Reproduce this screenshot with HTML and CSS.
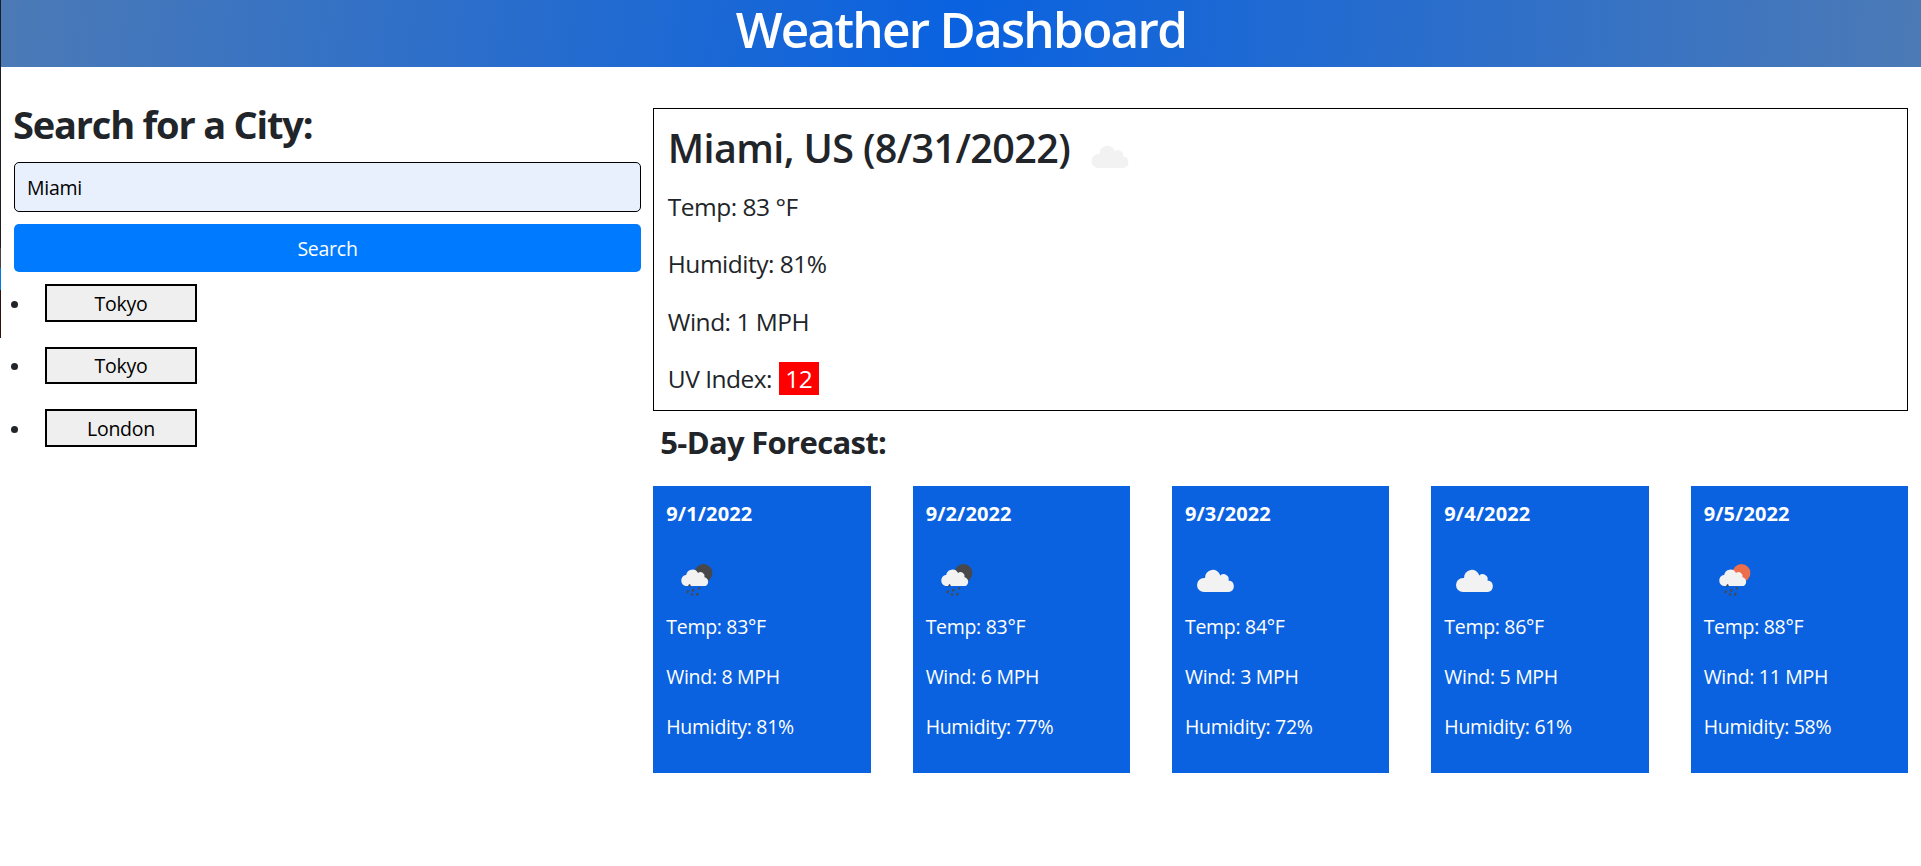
FILE: index.html
```html
<!DOCTYPE html>
<html lang="en">
<head>
<meta charset="utf-8">
<title>Weather Dashboard</title>
<link rel="stylesheet" href="styles.css">
</head>
<body>
<svg width="0" height="0" class="defs">
  <symbol id="cloud" viewBox="0 0 38 24">
    <path fill="#f2f2f2" d="M7 24A7 7 0 0 1 7 10H8A7.800 7.800 0 0 1 23.300 7.500A5 5 0 0 1 31.500 12.500A5.800 5.800 0 0 1 32 24Z"/>
  </symbol>
  <symbol id="rain" viewBox="0 0 33 32">
    <circle cx="24" cy="9" r="9" fill="currentColor"/>
    <path fill="#f2f2f2" d="M6 22A5.700 5.700 0 0 1 6 11H6.700A6.300 6.300 0 0 1 18.500 9A4.100 4.100 0 0 1 25 13.200A4.700 4.700 0 0 1 26 22Z"/>
    <path stroke="#48484a" stroke-width="2" d="M10.500 20.500l-1 2M14.500 25l-1.500 2.500M9 26.500l-1.500 2.500M20 23.500l-.8 1.800M13 29.500l-1 2M18.500 29l-1.300 2.500"/>
  </symbol>
</svg>
<div class="edge"></div>
<header class="header"><h1 class="title">Weather Dashboard</h1></header>
<main class="page">
  <aside class="sidebar">
    <h2 class="search-title">Search for a City:</h2>
    <input class="city-input" type="text" value="Miami">
    <button class="search-btn">Search</button>
    <ul class="history">
      <li class="history-item"><button class="history-btn">Tokyo</button></li>
      <li class="history-item"><button class="history-btn">Tokyo</button></li>
      <li class="history-item"><button class="history-btn">London</button></li>
    </ul>
  </aside>
  <section class="content">
    <div class="current">
      <h2 class="current-title"><span>Miami, US (8/31/2022)</span><svg class="current-icon"><use href="#cloud"/></svg></h2>
      <p class="stat">Temp: 83 °F</p>
      <p class="stat">Humidity: 81%</p>
      <p class="stat">Wind: 1 MPH</p>
      <p class="stat">UV Index: <span class="uv">12</span></p>
    </div>
    <h3 class="forecast-title">5-Day Forecast:</h3>
    <div class="forecast">
      <article class="card"><h4 class="date">9/1/2022</h4><div class="icon-box"><svg class="rain night"><use href="#rain"/></svg></div><p class="line">Temp: 83°F</p><p class="line">Wind: 8 MPH</p><p class="line">Humidity: 81%</p></article>
      <article class="card"><h4 class="date">9/2/2022</h4><div class="icon-box"><svg class="rain night"><use href="#rain"/></svg></div><p class="line">Temp: 83°F</p><p class="line">Wind: 6 MPH</p><p class="line">Humidity: 77%</p></article>
      <article class="card"><h4 class="date">9/3/2022</h4><div class="icon-box"><svg class="cloud"><use href="#cloud"/></svg></div><p class="line">Temp: 84°F</p><p class="line">Wind: 3 MPH</p><p class="line">Humidity: 72%</p></article>
      <article class="card"><h4 class="date">9/4/2022</h4><div class="icon-box"><svg class="cloud"><use href="#cloud"/></svg></div><p class="line">Temp: 86°F</p><p class="line">Wind: 5 MPH</p><p class="line">Humidity: 61%</p></article>
      <article class="card"><h4 class="date">9/5/2022</h4><div class="icon-box"><svg class="rain day"><use href="#rain"/></svg></div><p class="line">Temp: 88°F</p><p class="line">Wind: 11 MPH</p><p class="line">Humidity: 58%</p></article>
    </div>
  </section>
</main>
</body>
</html>
```
FILE: styles.css
```css
* { box-sizing: border-box; }
body { margin: 0; min-height: 866px; background: #fff; color: #212529; font-family: "Open Sans", "Noto Sans", sans-serif; font-size: 19.5px; line-height: 30px; letter-spacing: -0.25px; }
h1, h2, h3, h4, p, ul { margin: 0; padding: 0; }
.defs { position: absolute; }
.edge { position: absolute; left: 0; top: 0; width: 1px; height: 338px; background: linear-gradient(#1e1e22 248px, #444 248px 268px, #007bdc 268px 290px, #32100f 290px); }
.header { height: 67px; margin-left: 1px; background: linear-gradient(95deg, #4c7ab6, #0a62e0 50%, #4c7ab6); text-align: center; }
.title { color: #fff; font-size: 49.500px; line-height: 59px; font-weight: 600; letter-spacing: -1.750px; }
.page { display: flex; gap: 12.300px; padding: 41px 13px 0 14px; }
.sidebar { width: 627px; display: flex; flex-direction: column; }
.search-title { font-size: 38px; line-height: 48px; font-weight: 700; letter-spacing: -1.200px; margin: -8px 0 14px -1px; }
.city-input { height: 50px; border: 1px solid #000; border-radius: 5px; background: #e8f0fe; padding: 1px 13px 0 12px; font: inherit; letter-spacing: inherit; color: #000; margin-bottom: 12px; }
.search-btn { height: 48px; border: 0; border-radius: 5px; background: #007bff; color: #fff; font: inherit; letter-spacing: inherit; padding: 2px 0 0; }
.history { list-style: none; margin-top: 12px; display: flex; flex-direction: column; gap: 25px; }
.history-item { display: flex; align-items: center; height: 37.600px; margin-left: -3px; gap: 27px; }
.history-item::before { content: ""; width: 7px; height: 7px; margin-top: 3px; border-radius: 50%; background: #212529; }
.history-btn { width: 152px; height: 37.600px; border: 2px solid #000; background: #efefef; color: #000; font: inherit; letter-spacing: inherit; padding: 2px 0 0; }
.content { flex: 1; }
.current { height: 303px; border: 1px solid #000; padding: 10px 13.500px 0; }
.current-title { display: flex; font-size: 39.500px; line-height: 58px; font-weight: 600; height: 69px; letter-spacing: -0.620px; }
.current-icon { width: 39px; height: 24px; margin: 25px 0 0 21px; }
.stat { font-size: 24.500px; line-height: 37px; height: 57.400px; letter-spacing: -0.500px; }
.uv { display: inline-block; width: 40px; height: 33px; line-height: 33px; background: #f00; color: #fff; text-align: center; margin-left: 1px; }
.forecast-title { font-size: 31px; line-height: 40px; font-weight: 700; margin: 11px 0 0 7px; height: 64px; letter-spacing: -0.680px; }
.forecast { display: grid; grid-template-columns: repeat(5, 1fr); gap: 42px; }
.card { height: 287px; padding: 13px; background: #0a62e0; color: #fff; }
.date { font-size: 20px; line-height: 30px; font-weight: 700; letter-spacing: 0.100px; }
.icon-box { height: 80px; }
.icon-box svg { display: block; }
.rain { width: 33px; height: 32px; transform: translate(13.500px, 35px); }
.cloud { width: 39px; height: 24px; transform: translate(11.500px, 39px); }
.night { color: #48484a; }
.day { color: #ec6e4c; }
.line { height: 50px; padding-top: 3px; letter-spacing: -0.300px; }
```
